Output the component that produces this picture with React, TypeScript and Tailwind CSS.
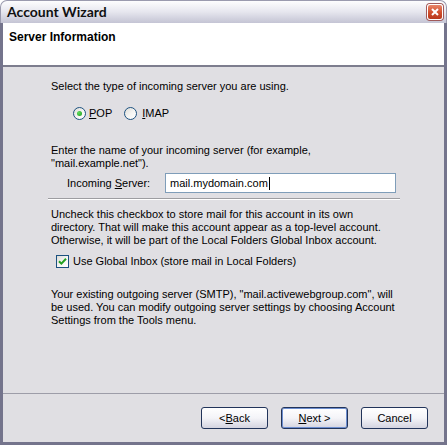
import React from "react";

const bodyFont = "font-['Liberation_Sans',Arial,sans-serif]";

function Radio({ checked }: { checked?: boolean }) {
  return (
    <span className="flex h-[13px] w-[13px] items-center justify-center rounded-full border border-[#1c5180] bg-gradient-to-br from-[#dcdcd6] via-[#f4f4f2] to-white">
      {checked && (
        <span className="h-[5px] w-[5px] rounded-full bg-[radial-gradient(circle_at_35%_35%,#5fdc5f,#1a9a1a)]" />
      )}
    </span>
  );
}

function CheckBox() {
  return (
    <span className="flex h-[13px] w-[13px] items-center justify-center border border-[#1c5180] bg-gradient-to-br from-[#dcdcd6] via-[#f4f4f2] to-white">
      <svg width="9" height="9" viewBox="0 0 9 9">
        <path d="M1 4.2 L3.4 6.6 L8 1.8" fill="none" stroke="#21a121" strokeWidth="2" />
      </svg>
    </span>
  );
}

function WizButton({
  children,
  isDefault,
}: {
  children: React.ReactNode;
  isDefault?: boolean;
}) {
  return (
    <button
      type="button"
      className={
        "flex h-[22px] w-[67px] items-center justify-center rounded-[3px] border border-[#22345a] bg-gradient-to-b from-white via-[#f4f4f8] to-[#d4d4e0] text-[11px] text-black " +
        (isDefault ? "shadow-[inset_0_0_0_1px_#6d8ed0]" : "")
      }
    >
      {children}
    </button>
  );
}

export default function App() {
  return (
    <div className={"flex h-[445px] w-[447px] flex-col overflow-hidden bg-white " + bodyFont}>
      {/* title bar */}
      <div className="flex h-[23px] shrink-0 items-center justify-between rounded-t-[7px] border border-b-0 border-[#9a9aae] bg-gradient-to-b from-[#fdfdfe] via-[#e6e6ee] to-[#c4c4d4] pl-[6px] pr-[3px]">
        <span className="font-['Lato',sans-serif] text-[14px] font-bold leading-none text-[#111]">
          Account Wizard
        </span>
        <span className="flex h-[16px] w-[16px] items-center justify-center rounded-[3px] border border-white bg-gradient-to-b from-[#e8866a] via-[#d2502e] to-[#b8381c] shadow-[0_0_0_1px_#a05a5a]">
          <svg width="8" height="8" viewBox="0 0 8 8">
            <path d="M1 1 L7 7 M7 1 L1 7" stroke="white" strokeWidth="2" />
          </svg>
        </span>
      </div>

      {/* body */}
      <div className="flex flex-1 flex-col border-x-[3px] border-b-[3px] border-[#74748c] bg-[#e0dfe3]">
        <div className="h-[44px] shrink-0 border-b-2 border-[#7d7d8e] bg-white pl-[6px] pt-[7px]">
          <div className="text-[12px] font-bold leading-[14px] text-black">Server Information</div>
        </div>

        <div className="flex flex-col pl-[48px] text-[11px] leading-[13px] text-black">
          <p className="mt-[13px]">Select the type of incoming server you are using.</p>

          <div className="ml-[22px] mt-[14px] flex items-center">
            <Radio checked />
            <span className="ml-[3px]">
              <u>P</u>OP
            </span>
            <span className="ml-[12px]">
              <Radio />
            </span>
            <span className="ml-[5px]">
              <u>I</u>MAP
            </span>
          </div>

          <p className="mt-[24px] w-[330px]">
            Enter the name of your incoming server (for example, "mail.example.net").
          </p>

          <div className="mt-[3px] flex items-center">
            <span className="ml-[16px] w-[98px]">
              Incoming <u>S</u>erver:
            </span>
            <div className="flex h-[20px] w-[231px] items-center border border-[#7f9db9] bg-white pl-[4px]">
              mail.mydomain.com
              <span className="ml-[1px] h-[13px] w-px bg-black" />
            </div>
          </div>

          <div className="-ml-[3px] mt-[5px] h-[2px] w-[352px] border-t border-b border-t-[#9d9da1] border-b-white" />

          <p className="mt-[8px] w-[340px]">
            Uncheck this checkbox to store mail for this account in its own directory. That will
            make this account appear as a top-level account. Otherwise, it will be part of the
            Local Folders Global Inbox account.
          </p>

          <div className="ml-[5px] mt-[8px] flex items-center">
            <CheckBox />
            <span className="ml-[4px]">Use Global Inbox (store mail in Local Folders)</span>
          </div>

          <p className="mt-[20px] w-[345px]">
            Your existing outgoing server (SMTP), "mail.activewebgroup.com", will be used. You can
            modify outgoing server settings by choosing Account Settings from the Tools menu.
          </p>
        </div>

        <div className="mt-auto flex h-[49px] shrink-0 items-start justify-end gap-[13px] border-t border-[#9d9da8] pr-[16px] pt-[13px]">
          <WizButton>
            &lt; <u>B</u>ack
          </WizButton>
          <WizButton isDefault>
            <u>N</u>ext &gt;
          </WizButton>
          <WizButton>Cancel</WizButton>
        </div>
      </div>
    </div>
  );
}
